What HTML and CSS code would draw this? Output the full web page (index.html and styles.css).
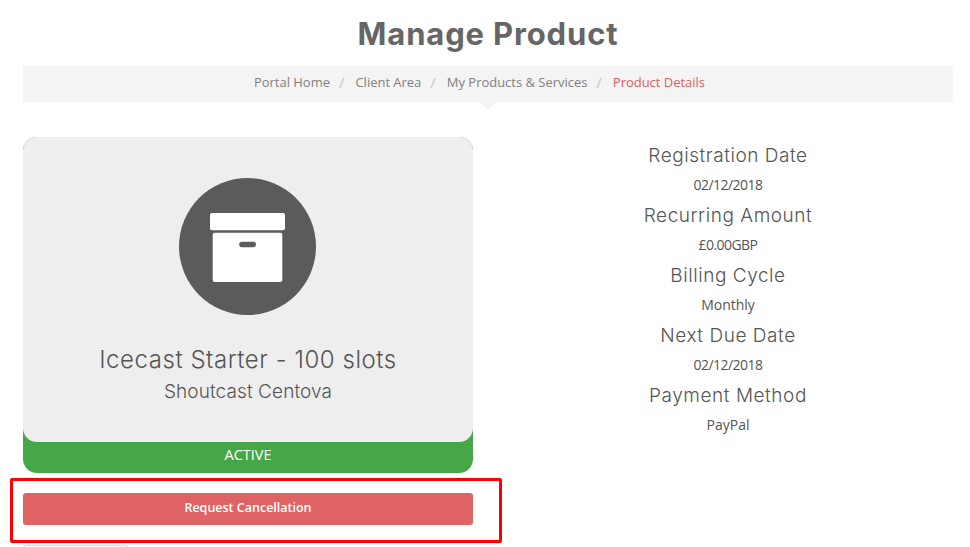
FILE: index.html
```html
<!DOCTYPE html>
<html lang="en">
<head>
<meta charset="utf-8">
<title>Manage Product</title>
<link rel="stylesheet" href="styles.css">
</head>
<body>
<main class="page">
  <h1 class="title">Manage Product</h1>
  <nav class="crumbs">
    <a class="crumb">Portal Home</a><span class="sep">/</span>
    <a class="crumb">Client Area</a><span class="sep">/</span>
    <a class="crumb">My Products &amp; Services</a><span class="sep">/</span>
    <span class="crumb current">Product Details</span>
  </nav>
  <div class="columns">
    <section class="left">
      <div class="product">
        <div class="product-card">
          <div class="icon-circle">
            <svg class="box-icon" width="76" height="70" viewBox="0 0 76 70" aria-hidden="true">
              <rect x="0" y="0" width="75" height="17.300" rx="2" fill="#fff"/>
              <path fill="#fff" fill-rule="evenodd" d="M4.700 19.700h65.600a2 2 0 0 1 2 2V67a2 2 0 0 1-2 2H4.700a2 2 0 0 1-2-2V21.700a2 2 0 0 1 2-2zM32 28.700a2.800 2.800 0 0 0 0 5.600h11.200a2.800 2.800 0 0 0 0-5.600z"/>
            </svg>
          </div>
          <h2 class="product-name">Icecast Starter - 100 slots</h2>
          <p class="product-group">Shoutcast Centova</p>
        </div>
        <div class="status">ACTIVE</div>
      </div>
      <div class="cancel-wrap">
        <a class="cancel">Request Cancellation</a>
        <div class="highlight"></div>
      </div>
      <div class="next-button"></div>
    </section>
    <section class="right">
      <h4 class="label">Registration Date</h4>
      <p class="value numeric">02/12/2018</p>
      <h4 class="label">Recurring Amount</h4>
      <p class="value numeric">£0.00GBP</p>
      <h4 class="label">Billing Cycle</h4>
      <p class="value">Monthly</p>
      <h4 class="label">Next Due Date</h4>
      <p class="value numeric">02/12/2018</p>
      <h4 class="label">Payment Method</h4>
      <p class="value">PayPal</p>
    </section>
  </div>
</main>
</body>
</html>
```
FILE: styles.css
```css
* { box-sizing: border-box; }
html, body { height: 100%; }
body {
  margin: 0;
  background: #fff;
  font-family: "Open Sans", "Liberation Sans", sans-serif;
  color: #666;
  overflow: hidden;
}
.page { padding: 0 17px 0 23px; }
.title {
  margin: 0;
  height: 66px;
  padding-top: 13px;
  text-align: center;
  font-family: Inter, "Liberation Sans", sans-serif;
  font-size: 31px;
  line-height: 42px;
  font-weight: 700;
  letter-spacing: 0.85px;
  color: #666;
}
.crumbs {
  position: relative;
  display: flex;
  justify-content: center;
  align-items: center;
  height: 36px;
  padding-right: 17px;
  padding-bottom: 5px;
  background: #f4f4f4;
  border-radius: 3px;
  font-size: 13px;
  letter-spacing: -0.02px;
}
.crumbs::after {
  content: "";
  position: absolute;
  left: 457px;
  top: 36px;
  border-left: 8px solid transparent;
  border-right: 8px solid transparent;
  border-top: 8px solid #f4f4f4;
}
.crumb { color: #808080; }
.crumb.current { color: #e05c5c; }
.sep { margin: 0 11px 0 9px; font-size: 15px; color: #c4c4c4; }
.columns {
  display: grid;
  grid-template-columns: 450px 450px;
  column-gap: 30px;
  margin-top: 35px;
}
.left { position: relative; }
.product {
  height: 336px;
  background: #46a748;
  border-radius: 14px;
}
.product-card {
  height: 305px;
  padding-top: 41px;
  background: #eee;
  border-radius: 14px;
  text-align: center;
}
.icon-circle {
  display: flex;
  justify-content: center;
  align-items: center;
  width: 137px;
  height: 137px;
  margin: 0 0 0 156px;
  padding-top: 3px;
  background: #5b5b5b;
  border-radius: 50%;
}
.box-icon { display: block; }
.product-name {
  margin: 30px 0 0;
  font-family: Inter, "Liberation Sans", sans-serif;
  font-size: 24px;
  line-height: 30px;
  font-weight: 300;
  letter-spacing: 0.55px;
  color: #555;
}
.product-group {
  margin: 5px 0 0;
  font-family: Inter, "Liberation Sans", sans-serif;
  font-size: 19px;
  line-height: 24px;
  font-weight: 300;
  letter-spacing: 0.1px;
  color: #555;
}
.status {
  height: 31px;
  text-align: center;
  font-size: 14.500px;
  line-height: 26px;
  font-weight: 500;
  color: #fff;
}
.cancel-wrap { position: relative; margin-top: 20px; }
.cancel {
  display: block;
  height: 32px;
  background: #e06363;
  border-radius: 3px;
  text-align: center;
  font-size: 12.500px;
  line-height: 29px;
  font-weight: 600;
  color: #fff;
}
.highlight {
  position: absolute;
  left: -13px;
  top: -15px;
  width: 492px;
  height: 65px;
  border: 3px solid #f00;
  border-radius: 2px;
}
.next-button {
  width: 105px;
  height: 20px;
  margin-top: 20px;
  border: 1px solid #ddd;
  border-radius: 3px;
}
.right { text-align: center; padding-top: 5px; }
.label {
  margin: 0;
  font-family: Inter, "Liberation Sans", sans-serif;
  font-size: 19px;
  line-height: 28px;
  font-weight: 300;
  letter-spacing: 0.55px;
  color: #555;
}
.value {
  margin: 0;
  padding-bottom: 2px;
  font-size: 14px;
  line-height: 30px;
  color: #555;
}
.value.numeric { letter-spacing: -0.55px; }
```
